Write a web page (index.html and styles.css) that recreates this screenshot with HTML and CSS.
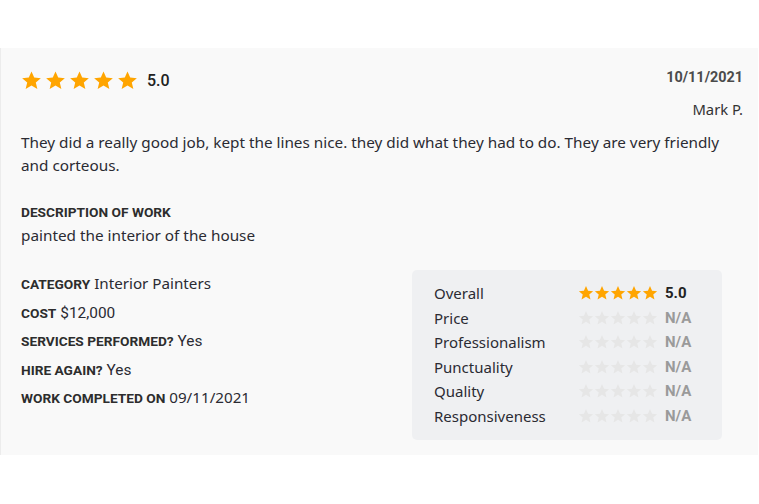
FILE: index.html
```html
<!DOCTYPE html>
<html>
<head>
<meta charset="utf-8">
<link rel="stylesheet" href="styles.css">
</head>
<body>
<svg width="0" height="0" class="defs">
  <defs>
    <symbol id="star" viewBox="0 0 24 24">
      <path d="M12 1.6l3.1 7.1 7.6.6-5.8 5 1.8 7.5L12 17.8l-6.7 4 1.8-7.5-5.8-5 7.6-.6z"/>
    </symbol>
  </defs>
</svg>
<div class="card">
  <div class="top">
    <div class="rating">
      <span class="stars big">
        <svg><use href="#star"/></svg><svg><use href="#star"/></svg><svg><use href="#star"/></svg><svg><use href="#star"/></svg><svg><use href="#star"/></svg>
      </span>
      <span class="score">5.0</span>
    </div>
    <div class="meta">
      <div class="date">10/11/2021</div>
      <div class="author">Mark P.</div>
    </div>
  </div>
  <p class="review">They did a really good job, kept the lines nice. they did what they had to do. They are very friendly and corteous.</p>
  <div class="desc">
    <div class="label">DESCRIPTION OF WORK</div>
    <div class="value">painted the interior of the house</div>
  </div>
  <div class="bottom">
    <ul class="facts">
      <li><span class="label">CATEGORY</span> Interior Painters</li>
      <li><span class="label">COST</span> <span class="alt">$12,000</span></li>
      <li><span class="label">SERVICES PERFORMED?</span> <span class="alt">Yes</span></li>
      <li><span class="label">HIRE AGAIN?</span> <span class="alt">Yes</span></li>
      <li><span class="label">WORK COMPLETED ON</span> 09/11/2021</li>
    </ul>
    <div class="breakdown">
      <div class="row"><span class="name">Overall</span><span class="stars small on"><svg><use href="#star"/></svg><svg><use href="#star"/></svg><svg><use href="#star"/></svg><svg><use href="#star"/></svg><svg><use href="#star"/></svg></span><span class="val">5.0</span></div>
      <div class="row"><span class="name">Price</span><span class="stars small off"><svg><use href="#star"/></svg><svg><use href="#star"/></svg><svg><use href="#star"/></svg><svg><use href="#star"/></svg><svg><use href="#star"/></svg></span><span class="val na">N/A</span></div>
      <div class="row"><span class="name">Professionalism</span><span class="stars small off"><svg><use href="#star"/></svg><svg><use href="#star"/></svg><svg><use href="#star"/></svg><svg><use href="#star"/></svg><svg><use href="#star"/></svg></span><span class="val na">N/A</span></div>
      <div class="row"><span class="name">Punctuality</span><span class="stars small off"><svg><use href="#star"/></svg><svg><use href="#star"/></svg><svg><use href="#star"/></svg><svg><use href="#star"/></svg><svg><use href="#star"/></svg></span><span class="val na">N/A</span></div>
      <div class="row"><span class="name">Quality</span><span class="stars small off"><svg><use href="#star"/></svg><svg><use href="#star"/></svg><svg><use href="#star"/></svg><svg><use href="#star"/></svg><svg><use href="#star"/></svg></span><span class="val na">N/A</span></div>
      <div class="row"><span class="name">Responsiveness</span><span class="stars small off"><svg><use href="#star"/></svg><svg><use href="#star"/></svg><svg><use href="#star"/></svg><svg><use href="#star"/></svg><svg><use href="#star"/></svg></span><span class="val na">N/A</span></div>
    </div>
  </div>
</div>
</body>
</html>
```
FILE: styles.css
```css
html, body {
  margin: 0;
  padding: 0;
  background: #ffffff;
}
.defs {
  position: absolute;
  width: 0;
  height: 0;
}
body {
  padding-top: 48px;
  font-family: "Noto Sans", "Open Sans", sans-serif;
  color: #2b2b33;
}
.card {
  background: #f9f9f9;
  border-left: 1px solid #ececec;
  width: 758px;
  box-sizing: border-box;
  padding: 21px 15px 15px 20px;
  height: 407px;
}
.top {
  display: flex;
  justify-content: space-between;
  align-items: flex-start;
}
.rating {
  display: flex;
  align-items: center;
  gap: 9px;
  margin-top: 1px;
}
.stars {
  display: inline-flex;
}
.stars svg {
  fill: #ffa500;
  display: block;
}
.stars.big {
  gap: 3px;
}
.stars.big svg {
  width: 21px;
  height: 21px;
}
.score {
  font-family: "Roboto", "Liberation Sans", sans-serif;
  font-weight: 500;
  font-size: 16px;
  color: #222;
}
.meta {
  text-align: right;
}
.date {
  font-family: "Roboto", "Liberation Sans", sans-serif;
  font-weight: 700;
  font-size: 14.4px;
  color: #4b4b4b;
  line-height: 18px;
}
.author {
  font-size: 14.8px;
  color: #333;
  margin-top: 12px;
  line-height: 20px;
}
.review {
  font-size: 15.3px;
  line-height: 23px;
  margin: 12px 0 0;
  color: #2b2b33;
}
.desc {
  margin-top: 26px;
}
.label {
  font-family: "Roboto", "Liberation Sans", sans-serif;
  font-weight: 700;
  font-size: 13.7px;
  color: #2d2d2d;
  text-transform: uppercase;
}
.desc .label {
  line-height: 18px;
  display: block;
}
.value {
  font-size: 15.3px;
  line-height: 23px;
  margin-top: 3px;
}
.bottom {
  display: flex;
  justify-content: space-between;
  margin-top: 23px;
}
.facts {
  list-style: none;
  margin: 3px 0 0;
  padding: 0;
  display: flex;
  flex-direction: column;
  gap: 8.5px;
}
.facts li {
  font-size: 15.2px;
  line-height: 20px;
  height: 20px;
  color: #2b2b33;
}
.facts .alt {
  font-family: "Roboto", "Liberation Sans", sans-serif;
  font-size: 15.4px;
}
.breakdown {
  width: 310px;
  box-sizing: border-box;
  background: #eff0f2;
  border-radius: 5px;
  margin-right: 21px;
  padding: 13px 22px 14px 22px;
  display: flex;
  flex-direction: column;
  gap: 4.5px;
}
.row {
  display: flex;
  align-items: center;
  height: 20px;
}
.name {
  width: 144px;
  font-size: 15px;
  color: #2b2b33;
}
.stars.small {
  gap: 0px;
}
.stars.small svg {
  width: 16px;
  height: 16px;
}
.stars.off svg {
  fill: #e6e6e6;
}
.val {
  margin-left: 7px;
  font-family: "Roboto", "Liberation Sans", sans-serif;
  font-weight: 700;
  font-size: 15px;
  color: #222;
}
.val.na {
  color: #9a9a9a;
}
```
